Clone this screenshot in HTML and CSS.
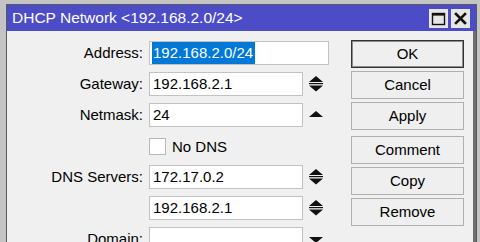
FILE: index.html
```html
<!DOCTYPE html>
<html>
<head>
<meta charset="utf-8">
<link rel="stylesheet" href="styles.css">
</head>
<body>
<div class="window">
  <div class="titlebar">
    <span class="title">DHCP Network &lt;192.168.2.0/24&gt;</span>
    <div class="tbtns">
      <span class="tbtn"><svg width="19" height="19" viewBox="0 0 19 19"><rect x="3.5" y="4.5" width="12" height="11" fill="none" stroke="#111" stroke-width="1.4"/><rect x="3" y="4" width="13" height="2.6" fill="#111"/></svg></span>
      <span class="tbtn"><svg width="19" height="19" viewBox="0 0 19 19"><path d="M5 5 L14 14 M14 5 L5 14" stroke="#111" stroke-width="2.6" stroke-linecap="square"/></svg></span>
    </div>
  </div>
  <div class="content">
    <div class="form">
      <span class="lbl">Address:</span>
      <div class="field wide"><span class="sel">192.168.2.0/24</span></div>

      <span class="lbl">Gateway:</span>
      <div class="field">192.168.2.1</div>
      <span class="spin"><svg width="14" height="16" viewBox="0 0 14 16"><path d="M7 0 L14 6 L0 6 Z M0 9.5 L14 9.5 L7 15.5 Z" fill="#111"/><rect x="0" y="7" width="14" height="1.2" fill="#111"/></svg></span>

      <span class="lbl">Netmask:</span>
      <div class="field">24</div>
      <span class="spin"><svg width="14" height="16" viewBox="0 0 14 16"><path d="M7 4 L14 10 L0 10 Z" fill="#111"/></svg></span>

      <span class="lbl"></span>
      <div class="checkrow"><span class="check"></span><span class="checklbl">No DNS</span></div>
      <span></span>

      <span class="lbl">DNS Servers:</span>
      <div class="field">172.17.0.2</div>
      <span class="spin"><svg width="14" height="16" viewBox="0 0 14 16"><path d="M7 0 L14 6 L0 6 Z M0 9.5 L14 9.5 L7 15.5 Z" fill="#111"/><rect x="0" y="7" width="14" height="1.2" fill="#111"/></svg></span>

      <span class="lbl"></span>
      <div class="field">192.168.2.1</div>
      <span class="spin"><svg width="14" height="16" viewBox="0 0 14 16"><path d="M7 0 L14 6 L0 6 Z M0 9.5 L14 9.5 L7 15.5 Z" fill="#111"/><rect x="0" y="7" width="14" height="1.2" fill="#111"/></svg></span>

      <span class="lbl">Domain:</span>
      <div class="field"></div>
      <span class="spin"><svg width="14" height="16" viewBox="0 0 14 16"><path d="M0 6 L14 6 L7 12 Z" fill="#111"/></svg></span>
    </div>
    <div class="buttons">
      <div class="btn default">OK</div>
      <div class="btn">Cancel</div>
      <div class="btn">Apply</div>
      <div class="btn sep">Comment</div>
      <div class="btn">Copy</div>
      <div class="btn">Remove</div>
    </div>
  </div>
</div>
</body>
</html>
```
FILE: styles.css
```css
html, body {
  margin: 0;
  padding: 0;
  height: 242px;
  overflow: hidden;
  background: #c4c4c4;
  font-family: "Liberation Sans", Arial, sans-serif;
  font-size: 15px;
  color: #000;
}
.window {
  margin: 4px 0 0 6px;
  width: 469px;
  height: 300px;
  border: 1px solid #5a5a5a;
  background: #f0f0f0;
  display: flex;
  flex-direction: column;
}
.titlebar {
  height: 26px;
  background: #4c4cc6;
  display: flex;
  align-items: flex-start;
  justify-content: space-between;
}
.title {
  color: #fff;
  font-size: 15.5px;
  line-height: 26px;
  padding-left: 5px;
}
.tbtns {
  display: flex;
  gap: 3px;
  margin-top: 4px;
  margin-right: 6px;
}
.tbtn {
  width: 19px;
  height: 19px;
  background: #e6e6e6;
  display: block;
}
.tbtn svg { display: block; }
.content {
  display: flex;
  padding-top: 9px;
  border-right: 3px solid #6e6e6e;
  flex: 1;
}
.form {
  margin-top: 1px;
  display: grid;
  grid-template-columns: 136px 154px 14px;
  grid-auto-rows: 24px;
  column-gap: 6px;
  row-gap: 7px;
  align-items: center;
}
.lbl {
  text-align: right;
  line-height: 24px;
}
.field {
  box-sizing: border-box;
  height: 24px;
  background: #fff;
  border: 1px solid #c2c2c2;
  padding-left: 3px;
  line-height: 22px;
  white-space: nowrap;
  overflow: hidden;
}
.field.wide {
  grid-column: span 2;
  width: 180px;
  padding-left: 2px;
}
.sel {
  display: inline-block;
  background: #0078d7;
  color: #fff;
  padding: 0 2px 0 1px;
  line-height: 22px;
}
.spin {
  display: flex;
  align-items: center;
  justify-content: center;
}
.spin svg { display: block; }
.checkrow {
  display: flex;
  align-items: center;
  gap: 6px;
}
.check {
  box-sizing: border-box;
  width: 17px;
  height: 17px;
  background: #fff;
  border: 1px solid #b8b8b8;
}
.buttons {
  margin-left: 28px;
  display: flex;
  flex-direction: column;
  gap: 3px;
}
.btn {
  box-sizing: border-box;
  width: 113px;
  height: 28px;
  border: 1px solid #b0b0b0;
  background: #efefef;
  text-align: center;
  line-height: 26px;
}
.btn.default {
  border: 1px solid #333;
  box-shadow: inset 0 0 0 1px #8c8c8c;
}
.btn.sep { margin-top: 3px; }
```
